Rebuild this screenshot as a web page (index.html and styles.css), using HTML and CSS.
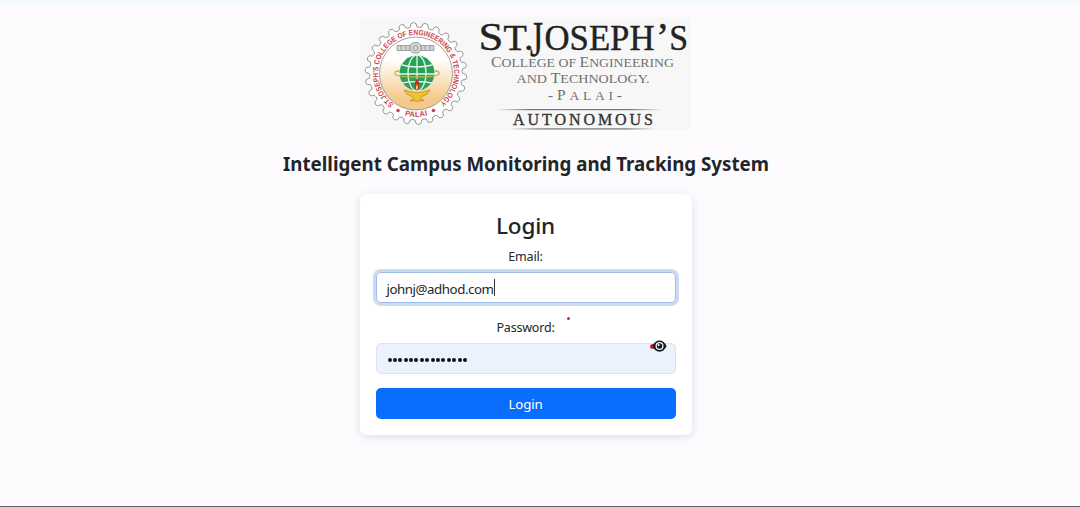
FILE: index.html
```html
<!DOCTYPE html>
<html lang="en">
<head>
<meta charset="utf-8">
<title>Login</title>
<link rel="stylesheet" href="styles.css">
</head>
<body>
<main class="page">
  <svg class="logo" viewBox="0 0 331 113" role="img" aria-label="St. Joseph's College">
    <defs>
      <linearGradient id="glow" x1="0" y1="0" x2="0" y2="1"><stop offset=".3" stop-color="#fff"/><stop offset=".85" stop-color="#f5c98b"/></linearGradient>
      <linearGradient id="fade"><stop offset="0" stop-color="#777" stop-opacity="0"/><stop offset=".2" stop-color="#777"/><stop offset=".8" stop-color="#777"/><stop offset="1" stop-color="#777" stop-opacity="0"/></linearGradient>
      <path id="ring" d="M33.7 86.8A38 38 0 1 1 78.3 86.8"/>
      <path id="ring-low" d="M40 96.8A43.5 43.5 0 0 0 72 96.8"/>
    </defs>
    <rect class="logo-back" width="331" height="113"/>
    <path id="gear" class="gear"/>
    <circle cx="56" cy="56.500" r="36.500" fill="url(#glow)" stroke="#777" stroke-width=".7"/>
    <text class="ring-text"><textPath href="#ring" textLength="189" lengthAdjust="spacingAndGlyphs">ST.JOSEPH'S COLLEGE OF ENGINEERING &amp; TECHNOLOGY</textPath></text>
    <text class="ring-text"><textPath href="#ring-low" startOffset="5" textLength="23" lengthAdjust="spacing">PALAI</textPath></text>
    <circle cx="38" cy="93.500" r="1.800" fill="#c9474b"/><circle cx="73.500" cy="93.500" r="1.800" fill="#c9474b"/>
    <g class="satellite"><path d="M37 28.500h13v5H37zM61 28.500h13v5H61zM41 28.500v5M46 28.500v5M65 28.500v5M70 28.500v5"/><path d="M50 28l3-2.500h5l3 2.500v5.500l-3 2.500h-5l-3-2.500z"/><circle cx="55.500" cy="31" r="2.500"/></g>
    <circle cx="57" cy="56" r="17.500" fill="#27a05a"/>
    <g class="globe-lines"><path d="M57 38v36M42 48q15 4 30 0M39 57h36M42 66q15-3 30 0"/><ellipse cx="57" cy="56" rx="9" ry="18"/></g>
    <path class="orbit" d="M39 54q-5 0-4 3c2 4 42 4 44 0q1-3-4-3"/>
    <path class="lamp" d="M44 73q13 5 26 0-2 5-8 6.500l-2 2.500 4 1.500q-7 1.500-14 0l4-1.500-2-2.500q-6-1.500-8-6.500z"/>
    <path d="M57 61q-5 8 0 13 5-5 0-13z" fill="#c62c30"/><path d="M57 67q-2 4 0 6 2-2 0-6z" fill="#f8d957"/>
    <g class="name">
      <text class="brand" x="118.500" y="32.500" textLength="55" lengthAdjust="spacingAndGlyphs">S<tspan class="small">T.</tspan></text>
      <text class="brand-j" x="170" y="38.500" textLength="13" lengthAdjust="spacingAndGlyphs">J</text>
      <text class="small" x="184.500" y="32.500" textLength="110" lengthAdjust="spacingAndGlyphs">OSEPH</text>
      <text class="brand" x="296" y="32.500" textLength="32" lengthAdjust="spacingAndGlyphs">’<tspan class="small">S</tspan></text>
      <text class="sub" x="131" y="49.500" textLength="183" lengthAdjust="spacingAndGlyphs">C<tspan class="sub-small">OLLEGE OF </tspan>E<tspan class="sub-small">NGINEERING</tspan></text>
      <text class="sub" x="156.500" y="66" textLength="133" lengthAdjust="spacingAndGlyphs"><tspan class="sub-small">AND </tspan>T<tspan class="sub-small">ECHNOLOGY.</tspan></text>
      <text class="sub" x="188" y="83" textLength="74">-P<tspan class="sub-small">ALAI</tspan>-</text>
      <rect x="136" y="92" width="167" height="1.200" fill="url(#fade)"/>
      <text class="autonomous" x="153" y="107.500" textLength="140">AUTONOMOUS</text>
      <rect x="150" y="111.300" width="146" height="1.200" fill="url(#fade)"/>
    </g>
  </svg>
  <h1 class="title"><svg class="title-line" viewBox="0 0 488 30"><text x="1" y="22" textLength="486" lengthAdjust="spacingAndGlyphs">Intelligent Campus Monitoring and Tracking System</text></svg></h1>
  <form class="card">
    <h2 class="heading">Login</h2>
    <label class="label">Email:</label>
    <div class="field focused"><span class="email">johnj@adhod.com</span><span class="caret"></span></div>
    <label class="label password-label">Password:<span class="speck"></span></label>
    <div class="field filled">
      <span class="dots"><i></i><i></i><i></i><i></i><i></i><i></i><i></i><i></i><i></i><i></i><i></i><i></i><i></i><i></i><i></i></span>
      <span class="red-mark"></span>
      <svg class="eye" viewBox="0 0 16 14"><path d="M.5 7Q3 1 8 1t7.500 6Q13 13 8 13T.500 7z" fill="#15181d"/><circle cx="8" cy="7" r="4.300" fill="#f2f4fb"/><circle cx="8" cy="7" r="2.900" fill="#15181d"/><circle cx="7" cy="6" r="1.200" fill="#f2f4fb"/></svg>
    </div>
    <button class="submit" type="button">Login</button>
  </form>
</main>
<script src="gear.js"></script>
</body>
</html>
```

FILE: styles.css
```css
* { box-sizing: border-box; }
body {
  margin: 0;
  height: 507px;
  overflow: hidden;
  background: #fefbff;
  border-top: 5px solid #f6fafe;
  border-bottom: 1px solid #635d66;
  color: #212529;
  font-family: "Noto Sans", "Open Sans", sans-serif;
}
.page {
  width: 1051px;
  padding-top: 12px;
  display: flex;
  flex-direction: column;
  align-items: center;
}
.logo { width: 331px; height: 113px; display: block; overflow: visible; }
.logo-back { fill: #f7f7f8; }
.gear { fill: #fff; stroke: #8b8b8d; stroke-width: .9; }
.ring-text { font: bold 7.6px "Liberation Sans", sans-serif; fill: #c9474b; }
.satellite { fill: #d5d5d5; stroke: #858585; stroke-width: .7; }
.globe-lines { fill: none; stroke: #e9f5e6; stroke-width: 1.3; }
.orbit { fill: none; stroke: #b9b643; stroke-width: 1.3; }
.lamp { fill: #efc52e; stroke: #a87924; stroke-width: .6; }
.name { font-family: "Liberation Serif", serif; }
.brand, .brand-j, .small { fill: #222; stroke: #222; stroke-width: .4; }
.brand { font-size: 41px; }
.brand-j { font-size: 50px; }
.small { font-size: 35px; }
.sub { font-size: 15.5px; fill: #707070; }
.sub-small { font-size: 13.5px; }
.autonomous { font-size: 16px; fill: #333; stroke: #333; stroke-width: .35; }
.title { margin: 19px 0 0; height: 30px; }
.title-line { display: block; width: 488px; height: 30px; fill: #212529; font-size: 19.5px; font-weight: 700; }
.card {
  width: 332px;
  height: 241px;
  margin-top: 15px;
  padding: 16px;
  display: flex;
  flex-direction: column;
  background: #fff;
  border-radius: 7px;
  box-shadow: 0 2px 8px rgba(40, 40, 70, .14);
}
.heading { margin: 0; height: 32px; font-size: 22.5px; line-height: 32px; font-weight: 500; text-align: center; letter-spacing: -.2px; }
.label { display: block; height: 30px; line-height: 30px; font-size: 12.5px; text-align: center; letter-spacing: -.2px; }
.field {
  height: 31px;
  position: relative;
  flex: none;
  display: flex;
  align-items: center;
  padding: 0 10px;
  border: 1px solid #dee2e6;
  border-radius: 5px;
}
.focused { border-color: #9dbde8; box-shadow: 0 0 0 3px #cbdcf1; }
.email { font-size: 13.3px; line-height: 20px; padding-top: 2px; letter-spacing: -.45px; }
.caret { width: 1px; height: 17px; background: #333; }
.password-label { position: relative; height: 40px; padding-top: 10px; }
.speck { position: absolute; left: 191px; top: 14px; width: 3px; height: 3px; border-radius: 50%; background: #c2283c; }
.filled { background: #ecf1fe; border-color: #dce2ee; }
.dots { display: flex; gap: 1.4px; padding-left: 1px; padding-top: 2px; }
.dots i { width: 4px; height: 4px; border-radius: 50%; background: #111; }
.red-mark { position: absolute; left: 273px; top: 0; width: 5px; height: 5px; border-radius: 50%; background: #c2283c; }
.eye { position: absolute; left: 275px; top: -5px; width: 15px; height: 14px; }
.submit {
  flex: none;
  height: 31px;
  margin-top: 14px;
  padding: 1px 0 0;
  border: 0;
  border-radius: 5px;
  background: #096dfd;
  color: #fff;
  font: 13.3px "Noto Sans", sans-serif;
  letter-spacing: -.2px;
}
```

FILE: gear.js
```js
// Outline of the emblem's gear: rounded teeth around the centre.
const teeth = 26;
let d = "";
const point = (r, a) => `${(56 + r * Math.cos(a)).toFixed(2)} ${(56.5 + r * Math.sin(a)).toFixed(2)}`;
for (let i = 0; i < teeth; i++) {
  const step = 2 * Math.PI / teeth;
  const a = i * step;
  d += `${i ? "L" : "M"}${point(46.8, a)}L${point(50, a + step * .08)}Q${point(52.2, a + step * .28)} ${point(50, a + step * .5)}L${point(46.8, a + step * .58)}Q${point(45.4, a + step * .79)} ${point(46.8, a + step)}`;
}
document.getElementById("gear").setAttribute("d", d + "Z");
```
